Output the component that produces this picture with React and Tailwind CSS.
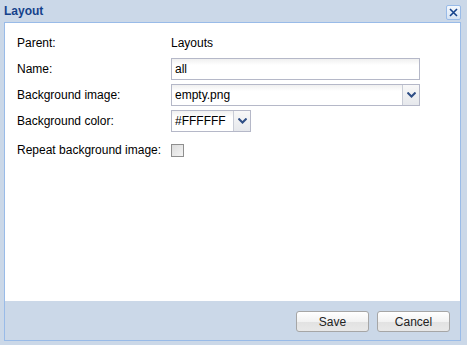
const font = { fontFamily: '"Liberation Sans", Arial, sans-serif' };

const Chevron = () => (
  <svg width="9" height="6" viewBox="0 0 9 6">
    <path d="M0.5 0.5 L4.5 4.5 L8.5 0.5" fill="none" stroke="#2f4f86" strokeWidth="2" />
  </svg>
);

const Combo = ({ value, width }) => (
  <div className={`flex h-[22px] ${width} border border-[#b5b8c8] bg-white`}>
    <div className="flex-1 flex items-center pl-[3px] text-[12px] text-black bg-gradient-to-b from-[#f0f0f0] to-white to-[30%]">
      {value}
    </div>
    <div className="w-[17px] flex items-center justify-center border-l border-[#c8ccd6] bg-gradient-to-b from-[#f8f8f8] to-[#e6e8ec]">
      <Chevron />
    </div>
  </div>
);

export default function App() {
  return (
    <div className="w-[467px] h-[345px] bg-[#cbd8e8] flex flex-col" style={font}>
      <div className="h-[22px] flex items-center justify-between pl-[4px] pr-[6px]">
        <span className="text-[12px] font-bold text-[#15428b]">Layout</span>
        <button className="w-[15px] h-[15px] mt-[2px] border border-[#99bbe8] rounded-[2px] bg-gradient-to-b from-[#f4f8fd] to-[#d6e3f3] flex items-center justify-center">
          <svg width="9" height="9" viewBox="0 0 9 9">
            <path d="M1 1 L8 8 M8 1 L1 8" stroke="#15428b" strokeWidth="1.6" />
          </svg>
        </button>
      </div>

      <div className="flex-1 ml-[4px] mr-[6px] mb-[4px] border border-[#99bbe8] flex flex-col">
        <div className="flex-1 bg-white pl-[12px] pt-[9px]">
          <div className="grid grid-cols-[154px_249px] auto-rows-[22px] gap-y-[4px] text-[12px] text-black items-center">
            <span>Parent:</span>
            <span>Layouts</span>

            <span>Name:</span>
            <div className="h-[22px] border border-[#b5b8c8] flex items-center pl-[3px] bg-gradient-to-b from-[#f0f0f0] to-white to-[30%]">
              all
            </div>

            <span>Background image:</span>
            <Combo value="empty.png" width="w-[249px]" />

            <span>Background color:</span>
            <Combo value="#FFFFFF" width="w-[80px]" />

            <span className="mt-[6px]">Repeat background image:</span>
            <div className="mt-[6px] w-[13px] h-[13px] border border-[#8f8f8f] bg-gradient-to-br from-[#dcdcdc] to-[#f4f4f4]" />
          </div>
        </div>

        <div className="h-[39px] flex justify-end gap-[8px] pt-[10px] pr-[10px]">
          {['Save', 'Cancel'].map((label) => (
            <button
              key={label}
              className="w-[73px] h-[21px] border border-[#a6a6a6] rounded-[3px] text-[12px] text-[#222] bg-[linear-gradient(to_bottom,#ffffff_0%,#f2f2f2_50%,#e2e2e2_51%,#e8e8e8_100%)]"
            >
              {label}
            </button>
          ))}
        </div>
      </div>
    </div>
  );
}
